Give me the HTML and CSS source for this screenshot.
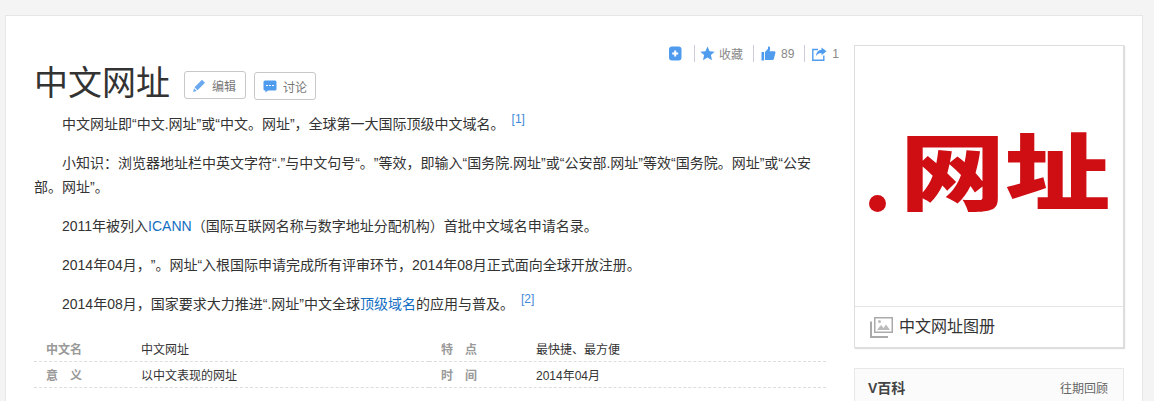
FILE: index.html
```html
<!DOCTYPE html>
<html lang="zh-CN">
<head>
<meta charset="utf-8">
<title>中文网址</title>
<link rel="stylesheet" href="styles.css">
</head>
<body>
<div class="card">
  <main class="main">
    <div class="tools">
      <svg class="ic-add" width="13" height="15" viewBox="0 0 13 15"><rect x="0" y="0.5" width="12.5" height="14" rx="3" fill="#4f9cee"/><path d="M3.2 7.5h6M6.2 4.5v6" stroke="#fff" stroke-width="2"/></svg>
      <span class="sep"></span>
      <span class="tool tool-star">
        <svg width="15" height="15" viewBox="0 0 15 15"><path d="M7.5 0.5l2.1 4.7 5.1.5-3.8 3.4 1.1 5.1-4.5-2.7-4.5 2.7 1.1-5.1L.3 5.7l5.1-.5z" fill="#4f9cee"/></svg>
        <span>收藏</span>
      </span>
      <span class="sep"></span>
      <span class="tool tool-like">
        <svg width="15" height="15" viewBox="0 0 15 15"><path d="M0.5 6h2.6v8.5H.5zM4 6l3-3.2V.8c0-.5 1.6-.6 2 .6.3 1 0 2.700-.4 3.800h4.600c1 0 1.500.9 1.200 1.800l-1.600 6c-.2.700-.7 1-1.400 1H4z" fill="#4f9cee"/></svg>
        <span>89</span>
      </span>
      <span class="sep"></span>
      <span class="tool tool-share">
        <svg width="15" height="14" viewBox="0 0 15 14"><path d="M6 2.500H.8v10.700h11V8.500" fill="none" stroke="#4f9cee" stroke-width="1.400"/><path d="M9.500 0.500l5 3.800-5 3.900V5.900C7 5.900 5.300 7 4 9c.3-3.500 2.300-6 5.500-6.200z" fill="#4f9cee"/></svg>
        <span>1</span>
      </span>
    </div>
    <div class="content">
      <div class="title-row">
        <h1 class="title">中文网址</h1>
        <a class="btn btn-edit">
          <svg width="13" height="13" viewBox="0 0 13 13"><path d="M9 .8l3 3-7.500 7.500-3 -3zM1 9.200l2.700 2.700-3.500 1z" fill="#6aa9ef"/></svg>
          <span>编辑</span>
        </a>
        <a class="btn btn-talk">
          <svg width="14" height="13" viewBox="0 0 14 13"><path d="M2 .5h10a1.500 1.500 0 0 1 1.500 1.500v7A1.500 1.500 0 0 1 12 10.500H5L2.500 12.500v-2H2A1.500 1.500 0 0 1 .5 9V2A1.500 1.500 0 0 1 2 .5z" fill="#4f9cee"/><path d="M3 5.500h8" stroke="#fff" stroke-width="1" stroke-dasharray="2 1"/></svg>
          <span>讨论</span>
        </a>
      </div>
      <p class="para">中文网址即“中文.网址”或“中文。网址”，全球第一大国际顶级中文域名。<sup class="ref">[1]</sup></p>
      <p class="para">小知识：浏览器地址栏中英文字符“.”与中文句号“。”等效，即输入“国务院.网址”或“公安部.网址”等效“国务院。网址”或“公安部。网址”。</p>
      <p class="para">2011年被列入<a class="link">ICANN</a>（国际互联网名称与数字地址分配机构）首批中文域名申请名录。</p>
      <p class="para">2014年04月，”。网址“入根国际申请完成所有评审环节，2014年08月正式面向全球开放注册。</p>
      <p class="para">2014年08月，国家要求大力推进“.网址”中文全球<a class="link">顶级域名</a>的应用与普及。<sup class="ref">[2]</sup></p>
      <div class="facts">
        <div class="fact"><span class="fact-k">中文名</span><span class="fact-v">中文网址</span></div>
        <div class="fact"><span class="fact-k">特&emsp;点</span><span class="fact-v">最快捷、最方便</span></div>
        <div class="fact"><span class="fact-k">意&emsp;义</span><span class="fact-v">以中文表现的网址</span></div>
        <div class="fact"><span class="fact-k">时&emsp;间</span><span class="fact-v">2014年04月</span></div>
      </div>
    </div>
  </main>
  <aside class="side">
    <div class="album">
      <div class="logo"><span class="logo-dot"></span><span class="logo-text">网址</span></div>
      <div class="album-foot">
        <svg width="23" height="21" viewBox="0 0 23 21"><path d="M1 4.500v15.500h17" fill="none" stroke="#aaa" stroke-width="2"/><rect x="4" y="0" width="19" height="16" fill="#aaa"/><rect x="5.500" y="1.500" width="16" height="13" fill="#fff"/><path d="M7 13l4-5 2.500 3 2.500-3.500 4 5.500z" fill="#bbb"/><circle cx="9.500" cy="4.500" r="1.500" fill="#bbb"/></svg>
        <span class="album-name">中文网址图册</span>
      </div>
    </div>
    <div class="vbk">
      <b>V百科</b><span>往期回顾</span>
    </div>
  </aside>
</div>
</body>
</html>
```

FILE: styles.css
```css
html, body { margin: 0; padding: 0; height: 401px; overflow: hidden; background: #f4f4f4; }
body { font-family: "Liberation Sans", "Noto Sans CJK SC", sans-serif; color: #333; font-size: 14px; text-spacing-trim: space-all; }
svg { display: block; flex: none; }
.card { display: flex; gap: 15px; box-sizing: border-box; width: 1138px; height: 386px; margin: 15px 0 0 5px; padding: 29px 0 0 28px; background: #fff; border: 1px solid #e6e6e6; border-bottom: 0; overflow: hidden; }
.main { width: 805px; }
.tools { display: flex; align-items: center; justify-content: flex-end; height: 17px; color: #888; font-size: 12px; }
.sep { width: 1px; height: 17px; background: #ccd; }
.ic-add { margin-right: 12px; }
.tool { display: flex; align-items: center; gap: 4px; }
.tool-star { padding: 0 10px 0 5px; }
.tool-like { padding: 0 10px 0 7px; gap: 5px; }
.tool-share { padding: 0 0 0 7px; gap: 5px; }
.content { width: 792px; }
.title-row { display: flex; align-items: flex-start; height: 50px; }
.title { margin: -2px 14px 0 0; font-size: 34px; font-weight: 400; line-height: 46px; color: #333; }
.btn { display: flex; align-items: center; gap: 6px; box-sizing: border-box; width: 62px; height: 28px; padding-left: 8px; border: 1px solid #c8c8c8; border-radius: 3px; color: #777; font-size: 12px; background: #fff; }
.btn-edit { margin-top: 9px; }
.btn-talk { margin: 10px 0 0 8px; }
.para { margin: 0 0 15px; text-indent: 28px; line-height: 24px; }
.ref { font-size: 12px; line-height: 0; color: #3f88d8; margin-left: 7px; }
.link { color: #136ec2; }
.facts { display: grid; grid-template-columns: 395px 397px; margin-top: 20px; }
.fact { display: flex; align-items: center; height: 26px; border-bottom: 1px dashed #ddd; box-sizing: border-box; font-size: 12px; }
.fact-k { width: 95px; padding-left: 12px; color: #999; font-weight: 700; }
.fact-v { color: #333; }
.side { width: 270px; }
.album { box-sizing: border-box; width: 270px; height: 303px; border: 1px solid #ddd; box-shadow: 1px 1px 1px #ddd; background: #fff; }
.logo { display: flex; align-items: center; justify-content: center; height: 261px; padding-bottom: 18px; box-sizing: border-box; border-bottom: 1px solid #e6e6e6; color: #cf0e14; }
.logo-dot { width: 17px; height: 17px; margin: 72px 19px 0 0; border-radius: 50%; background: #cf0e14; }
.logo-text { font-family: "Noto Sans CJK SC", sans-serif; font-weight: 900; font-size: 102px; line-height: 80px; transform: translateX(-2px) scale(1.03, .83); }
.album-foot { display: flex; align-items: center; gap: 6px; height: 40px; padding-left: 15px; font-size: 16px; color: #333; }
.album-name { padding-bottom: 5px; }
.vbk { display: flex; align-items: center; justify-content: space-between; box-sizing: border-box; width: 270px; height: 60px; margin-top: 20px; padding: 0 15px 22px 13px; border: 1px solid #e8e8e8; background: #fbfbfb; }
.vbk b { font-size: 14px; color: #444; }
.vbk span { font-size: 12px; color: #666; }
```
